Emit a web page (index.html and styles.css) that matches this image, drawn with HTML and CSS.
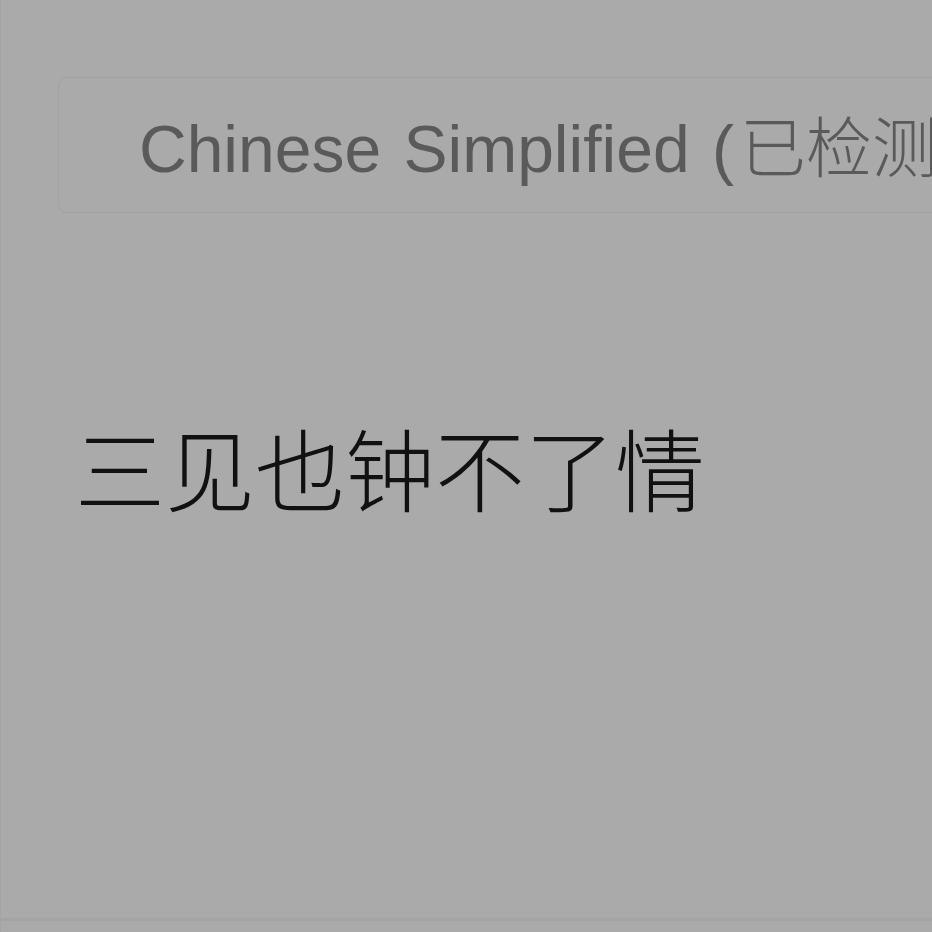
FILE: index.html
```html
<!DOCTYPE html>
<html lang="zh">
<head>
<meta charset="utf-8">
<link rel="stylesheet" href="styles.css">
</head>
<body>
<div class="page">
  <div class="lang-box">
    <span class="lang-label">Chinese Simplified (<span class="lang-cjk">已检测到)</span></span>
  </div>
  <div class="source-text">三见也钟不了情</div>
</div>
<div class="footer-line"></div>
</body>
</html>
```
FILE: styles.css
```css
html, body {
  margin: 0;
  padding: 0;
  height: 100%;
  overflow: hidden;
  background: #aaaaaa;
}
body {
  border-left: 1px solid #a4a4a4;
  box-sizing: border-box;
  position: relative;
}
.page {
  padding-top: 77px;
  padding-left: 57px;
}
.lang-box {
  width: 1000px;
  height: 136px;
  border: 1px solid #a2a2a2;
  border-radius: 9px;
  box-sizing: border-box;
  display: flex;
  align-items: center;
  padding-left: 80px;
  white-space: nowrap;
}
.lang-label {
  font-family: "Liberation Sans", "Noto Sans CJK SC", sans-serif;
  font-size: 66px;
  word-spacing: 4px;
  line-height: 1;
  color: #5a5a5a;
  margin-top: 2px;
}
.lang-cjk {
  font-family: "Noto Sans CJK SC", sans-serif;
  font-weight: 300;
  font-size: 66px;
  margin-left: 6px;
}
.source-text {
  margin-top: 203px;
  margin-left: 17px;
  font-family: "Noto Sans CJK SC", sans-serif;
  font-weight: 300;
  font-size: 90px;
  line-height: 100px;
  color: #111111;
  white-space: nowrap;
}
.footer-line {
  position: absolute;
  left: 0;
  right: 0;
  top: 918px;
  height: 3px;
  background: #a3a3a3;
}
```
